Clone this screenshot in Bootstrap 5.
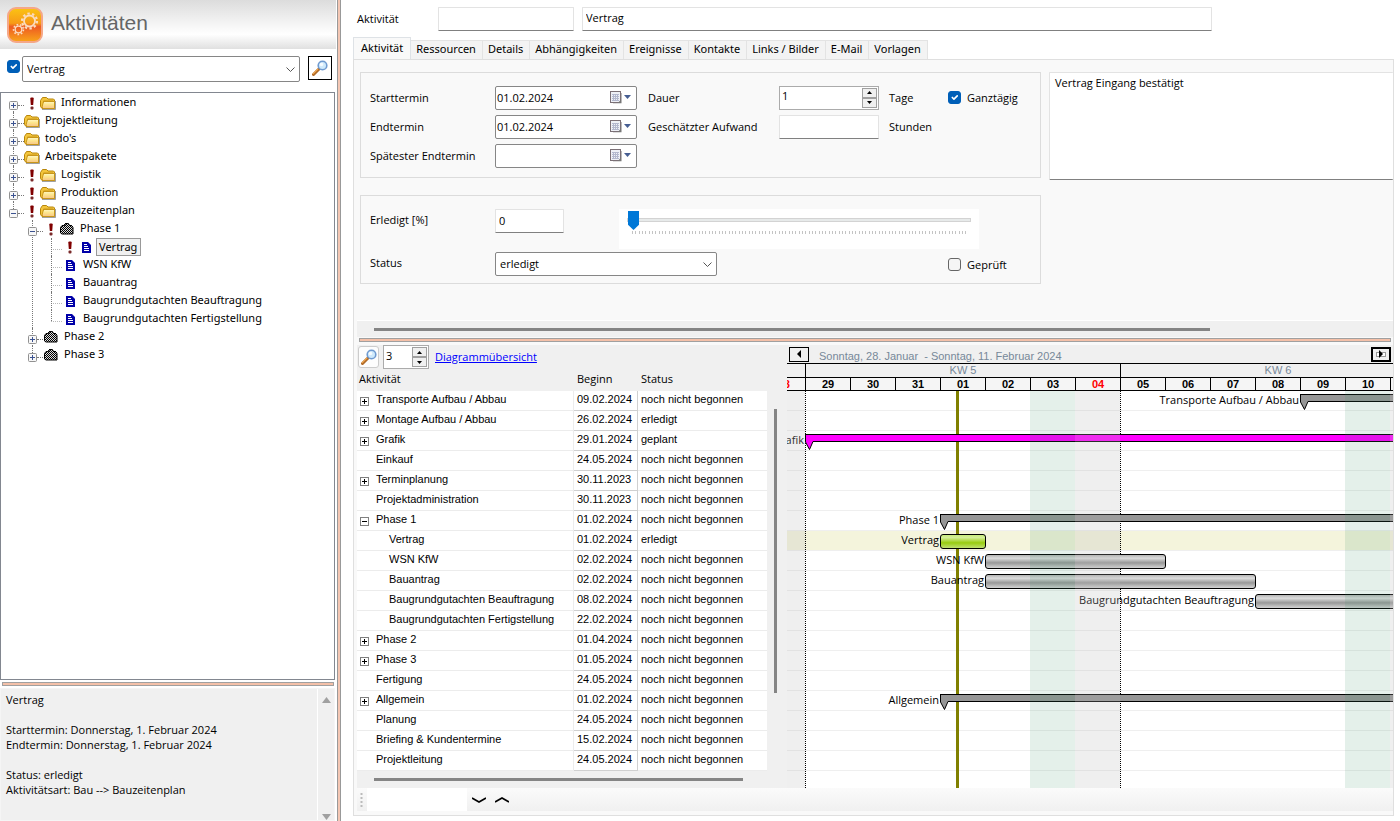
<!DOCTYPE html>
<html lang="de">
<head>
<meta charset="utf-8">
<meta name="viewport" content="width=device-width, initial-scale=1">
<title>Aktivitäten</title>
<link rel="stylesheet" href="https://cdn.jsdelivr.net/npm/bootstrap@5.3.0/dist/css/bootstrap.min.css">
<style>
body{font-family:"Open Sans","Noto Sans",sans-serif;font-size:11px;line-height:15px;color:#000;background:#fff}
svg{display:block;flex:none}
/* left pane */
.side{flex:0 0 24%;min-width:0}
.side-head{height:49px;background:linear-gradient(#dcdcdc,#fff 70%,#e0e0e0);gap:8px;padding-left:7px}
.side-head h1{font:21px/28px "Liberation Sans",sans-serif;color:#666;margin:0 0 4px}
.search-row{padding:7px 4px 0 7px;height:43px;gap:2px}
.search-row .form-check-input{margin-top:4px}
.form-check-input{width:13px;height:13px;margin:0;flex:none;border:1px solid #666;border-radius:3px!important;background-color:#f5f5f5}
.form-check-input:checked{background-color:#005fb8;border-color:#005fb8;background-size:11px}
.form-check-input+label{padding-left:6px}
.combo{font-size:11px;line-height:15px;padding:0 20px 2px 4px;border:1px solid #868686;border-radius:2px;height:26px;background-color:#fff;background-position:right 3px center;background-size:11px;color:#000;
 background-image:url("data:image/svg+xml,%3Csvg xmlns='http://www.w3.org/2000/svg' viewBox='0 0 11 11'%3E%3Cpath d='M1.5 3.5l4 4 4-4' fill='none' stroke='%23555'/%3E%3C/svg%3E")}
.find{width:24px;height:24px;border:1px solid #000;background:#fff;padding:0;margin:0 0 0 6px}
.tree-box{border:1px solid #828790;margin-right:1px;padding:1px 0 0 8px;background:#fff;font-family:"Noto Sans","Open Sans",sans-serif}
.tree,.tree ul{list-style:none;margin:0;padding:0}
.tree ul{margin-left:19px}
.tree li{position:relative}
.tree li::before{content:"";position:absolute;left:4px;top:0;bottom:0;border-left:1px dotted #777}
.tree>li:first-child::before{top:11px}
.tree li:last-child::before{bottom:auto;height:11px}
.node{height:18px;display:flex;align-items:center}
.pm{width:9px;height:9px;flex:none;margin-top:4px;position:relative;z-index:1}
.dots{width:6px;flex:none;border-top:1px dotted #777;margin-top:4px}
.leaf{width:15px;flex:none;border-top:1px dotted #777;margin-top:4px;clip-path:inset(0 0 0 4px)}
.slot{width:16px;height:16px;flex:none;display:flex;align-items:center;justify-content:center}
.cap{padding:0 0 2px 5px;line-height:16px;white-space:nowrap}
.cap.sel{margin-left:2px;padding:0 3px 0 2px;border:1px solid #999;background:#f0f0f0}
.splitter{height:4px;border:1px solid #a0a0a0;background:#f4c0a8}
.side .splitter{margin:2px 2px 2px}
.vsplit{width:4px;flex:none;border:1px solid #999;border-width:0 1px;background:#f4c7b4;margin-left:1px}
.memo{background:#f0f0f0;border:1px solid #f5f5f5;padding:3px 0 0 5px;margin-right:1px}
.memo p{margin:0}
.memo-text{padding-bottom:8px}
.memo-bar{width:17px;border-left:1px solid #fff;flex:none;margin-top:-3px}
/* text fields */
.tb{font-size:11px;line-height:15px;height:24px;padding:0 3px 2px;border:1px solid #e3e3e3;border-bottom-color:#808080;border-radius:1px;background:#fff;color:#000;min-width:0}
.tb:focus{box-shadow:none}
.top-row{height:37px;padding-left:16px}
.top-row label{width:81px}
.f-nr{flex:128 1 0}.f-name{flex:622 1 0}.f-rest{flex:188 1 0}
.nav-tabs{border:0;padding-left:12px;font-family:"Noto Sans","Open Sans",sans-serif}
.nav-tabs .nav-link{font-size:11px;line-height:14px;color:#000;background:#f3f3f3;border:1px solid #e3e3e3;border-left-width:0;border-bottom:0;border-radius:0;padding:1px 6px 3px 5px;height:19px;margin:0}
.nav-tabs .nav-link.active{background:#f9f9f9;border-left-width:1px;height:23px;padding:2px 7px 5px;margin-bottom:-1px;color:#000}
.pane{background:#f9f9f9;border:1px solid #dfdfdf;margin:0 6px 5px 12px;min-width:0}
.pane-form{padding:12px 0 0 6px;gap:8px}
.groups{flex:681 1 0;min-width:0;gap:17px}
.grp{border:1px solid #dcdcdc}
.grid-a{display:grid;grid-template-columns:125px 142px 11px 131px 100px 10px 59px 1fr;grid-auto-rows:29px;align-items:center;padding:10px 0 7px 9px}
.grid-b{display:grid;grid-template-columns:125px 222px 231px 1fr;row-gap:3px;padding:13px 0 7px 9px}
.grid-b>label{padding-top:3px}
.grid-b .combo{height:24px}
.w-pc{width:69px}
.date{position:relative}
.date .tb{width:100%;border-color:#868686;border-radius:2px;padding:0 1px 1px}
.date button{position:absolute;right:5px;top:3px;border:0;background:none;padding:0}
.spin{border:1px solid #ababab;background:#fff;height:24px;padding:1px}
.spin input{border:0;padding:0 1px;font-size:11px;line-height:15px;min-width:0;width:100%;height:16px;background:#fff;color:#000}
.spin div button{display:flex;align-items:center;justify-content:center;width:15px;height:10px;border:1px solid #a0a0a0;background:#f0f0f0;padding:0}
.notes{flex:333 1 0;height:108px;resize:none;padding:2px 5px;border-right:0}
/* slider */
.track-box{background:#fff;height:40px;padding:1px 8px 0;position:relative;width:360px;margin-left:-98px;justify-self:start;grid-column:3/5}
.track-box::after{content:"";position:absolute;left:13px;right:12px;top:22px;height:3px;background:repeating-linear-gradient(90deg,#c4c4c4 0 1px,transparent 1px 3px,#c4c4c4 3px 4px,transparent 4px 7px,#c4c4c4 7px 8px,transparent 8px 10px)}
.track-box input{display:block;appearance:none;-webkit-appearance:none;width:100%;height:20px;margin:0;background:none}
.track-box input::-webkit-slider-runnable-track{height:4px;background:#e7eaea;border:1px solid #d3d3d3}
.track-box input::-webkit-slider-thumb{-webkit-appearance:none;width:11px;height:19px;margin-top:-8px;background:#0078d7;border:0;border-radius:0;clip-path:polygon(0 0,100% 0,100% 72%,50% 100%,0 72%)}
.sb-h{background:#f0f0f0;border-top:1px solid #fff;padding:7px 0 0 17px;height:17px}
.sb-h div{height:3px;background:#858585}
.pane>.sb-h{margin-left:3px}
.pane>.splitter{margin:1px 2px 3px 5px}
/* lower panel */
.lower{background:#f0f0f0;margin-left:3px}
.plan{flex:430 1 0;min-width:0}
.plan-bar{height:24px;gap:4px;padding-left:1px}
.plan-bar .spin{width:46px}
.plan-bar a{color:#00f;margin:0 0 2px 2px}
.mag{width:21px;height:22px;border:1px solid #ccc;border-radius:3px;background:#fdfdfd;padding:0}
.ptab{font:11px/14px "Liberation Sans",sans-serif;width:100%;table-layout:fixed;border-collapse:separate;border-spacing:0}
.ptab th{font:11px/15px "Open Sans",sans-serif;height:22px;padding:2px 0 5px 2px}
.ptab td{background:#fff;height:20px;padding:0 0 3px 2px;border-bottom:1px solid #ececec;border-right:1px solid #ececec;white-space:nowrap;overflow:hidden}
.ptab th+th,.ptab td+td{padding-left:3px}
.ptab td:first-child{padding-left:19px;position:relative}
.ptab td.sub:first-child{padding-left:32px}
.ptab td:nth-child(2){border-color:#d0d0d0}
.ptab td:last-child{border-right:0}
.ptab svg{position:absolute;left:3px;top:6px}
.c-date{width:64px}.c-stat{width:129px}
.sb-v{width:20px;flex:none;padding:40px 10px 0 7px}
.sb-v div{width:3px;height:284px;background:#858585}
/* chart */
.chart{flex:606 1 0;min-width:0;overflow:hidden;--day:45px;--zero:18px}
.chart-bar{height:18px;font:11px/14px "Liberation Sans",sans-serif;color:#778899;padding:0 2px}
.chart-bar span{white-space:pre;padding:3px 0 0 10px}
.chart-bar button{width:20px;height:15px;border:1px solid #000;background:#f0f0f0;padding:0;display:flex;align-items:center;justify-content:center}
.chart-bar button.end{border-width:2px}
.weeks,.days{display:flex;border-top:1px solid #000;height:14px;font:11px/13px "Liberation Sans",sans-serif;color:#778899}
.weeks div{flex:none;width:calc(var(--day)*7);border-left:1px solid #000;text-align:center}
.weeks div:first-child{width:var(--zero);border:0}
.days{border-bottom:1px solid #000;color:#000;font-weight:bold;background:#f5f5f5}
.days div{flex:none;width:var(--day);border-left:1px solid #000;text-align:center;line-height:13px}
.days div:first-child{width:var(--zero);border:0;overflow:hidden;display:flex;justify-content:flex-end;padding-right:15px}
.days .sun{color:#f00}
.canvas{position:relative;background:#fff;height:397px}
.lane{height:20px;border-bottom:1px solid #efefef;position:relative}
.lane.cur{background:#f4f4dc}
.wk,.off,.now{position:absolute;top:0;bottom:0;left:calc(var(--zero) + var(--day)*var(--s))}
.wk{border-left:1px dotted #000}
.now{width:3px;background:#808000;margin-left:16px}
.off{width:var(--day);background:rgba(58,146,102,.137);z-index:3}
.off.su{background:rgba(187,187,187,.235)}
.item{position:absolute;top:3px;height:15px;left:calc(var(--zero) + var(--day)*var(--s));width:calc(var(--day)*var(--n) + 1px);z-index:1}
.item span{position:absolute;right:100%;top:-2px;white-space:nowrap;line-height:14px;padding-right:2px}
.task{border:1px solid #000;border-radius:3px;background:linear-gradient(#b4b4b4,#dcdcdc 25%,#989898 60%,#d4d4d4)}
.task.hot{background:linear-gradient(#c8ec7c,#d4ee98 20%,#98cc10 60%,#c0e070)}
.sum{height:8px;border:1px solid #000;background:#969696}
.sum.mg{background:#f0f}
.sum svg{position:absolute;left:-1px;top:5px}
.foot{margin-left:3px;height:23px;background:linear-gradient(#fbfbfb,#f0f0f0);padding-left:3px}
.foot input{width:100px;height:23px;border:0;margin:0 5px 0 4px}
.foot button{border:0;background:none;padding:0;margin-right:9px}
</style>
</head>
<body>
<svg width="0" height="0" class="position-absolute" aria-hidden="true">
 <defs>
  <linearGradient id="gFold" x1="0" y1="0" x2="0" y2="1"><stop offset="0" stop-color="#fffbd0"/><stop offset=".5" stop-color="#fde58a"/><stop offset="1" stop-color="#f8c48a"/></linearGradient>
  <linearGradient id="gLogo" x1="0" y1="0" x2="0" y2="1"><stop offset="0" stop-color="#fbc413"/><stop offset=".45" stop-color="#f79a18"/><stop offset=".55" stop-color="#ee5a22"/><stop offset="1" stop-color="#f9a61a"/></linearGradient>
  <pattern id="chk" width="2" height="2" patternUnits="userSpaceOnUse"><rect width="2" height="2" fill="#000"/><rect width="1" height="1" fill="#ddd"/><rect x="1" y="1" width="1" height="1" fill="#ddd"/></pattern>
 </defs>
 <symbol id="plus" viewBox="0 0 9 9"><rect x=".5" y=".5" width="8" height="8" rx="1" fill="#f7f7f7" stroke="#919191"/><path d="M2 4.500h5M4.500 2v5" stroke="#3b5290"/></symbol>
 <symbol id="minus" viewBox="0 0 9 9"><rect x=".5" y=".5" width="8" height="8" rx="1" fill="#f7f7f7" stroke="#919191"/><path d="M2 4.500h5" stroke="#3b5290"/></symbol>
 <symbol id="gplus" viewBox="0 0 9 9"><rect x=".5" y=".5" width="8" height="8" fill="#fff" stroke="#808080"/><path d="M2 4.500h5M4.500 2v5" stroke="#000"/></symbol>
 <symbol id="gminus" viewBox="0 0 9 9"><rect x=".5" y=".5" width="8" height="8" fill="#fff" stroke="#808080"/><path d="M2 4.500h5" stroke="#000"/></symbol>
 <symbol id="bang" viewBox="0 0 4 13"><path d="M.3 1.500Q.3.500 1.300.500h1.400q1 0 1 1L3.200 8H.8z" fill="#800000"/><rect x=".5" y="9.500" width="3" height="3" rx="1" fill="#7a2a2a"/></symbol>
 <symbol id="folder" viewBox="0 0 16 14"><path d="M2 13.500h13.500V5" fill="none" stroke="#777" opacity=".7"/><path d="M.5 4.500L2.500 1.500h4l1.500 1.500h5.500l1 1v8.500H2l-1.500-2z" fill="#f3c53c" stroke="#b8860b"/><path d="M3.500 6.500V5h9.500M3.500 5.500h11v7H3l-1-1.500z" fill="url(#gFold)" stroke="#c8961a"/></symbol>
 <symbol id="bin" viewBox="0 0 14 12"><path d="M1 3l1-1h2l1-2h3l1 2h2l2 2v7H1L0 9V4z" fill="url(#chk)" shape-rendering="crispEdges"/><path d="M.5 10V4.500L2 2.500h2.500L5.500.5h3l1 2h2l1.500 2v6.500h-11z" fill="none" stroke="#000"/></symbol>
 <symbol id="doc" viewBox="0 0 9 11"><path d="M0 0h6l3 3v8H0z" fill="#0000a8"/><path d="M2 2.500h3M2 4.500h4M2 6.500h5M2 8.500h5" stroke="#fff"/></symbol>
 <symbol id="glass" viewBox="0 0 16 16"><path d="M1.500 14.500L7 9" stroke="#b06a28" stroke-width="3" stroke-linecap="round"/><path d="M1.300 13.700L5.800 9.200" stroke="#f0a850" stroke-width="1.200" stroke-linecap="round"/><circle cx="10.500" cy="5.500" r="4.300" fill="#cfeafc" stroke="#6f9ad0" stroke-width="1.600"/><circle cx="9.500" cy="4.500" r="1.800" fill="#fff" opacity=".8"/></symbol>
 <symbol id="cal" viewBox="0 0 22 16"><path d="M11.500 4v10H3" stroke="#bbb" fill="none"/><rect x=".5" y="2.500" width="10" height="11" fill="#eef0f6" stroke="#7b7076"/><path d="M3.500 5v7M5.500 5v7M7.500 5v7M2 5.500h7M2 7.500h7M2 9.500h7M2 11.500h7" stroke="#b3b8ce"/><path d="M11 10.500L8 14h3z" fill="#777"/><path d="M14 6h7l-3.500 4z" fill="#465e92"/></symbol>
 <symbol id="up" viewBox="0 0 5 3"><path d="M0 3h5L2.500 0z" fill="#000"/></symbol>
 <symbol id="down" viewBox="0 0 5 3"><path d="M0 0h5L2.500 3z" fill="#000"/></symbol>
</svg>

<div class="d-flex min-vh-100">
 <aside class="side d-flex flex-column">
  <header class="side-head d-flex align-items-center">
   <svg width="36" height="36" viewBox="0 0 36 36"><rect x="1" y="1" width="34" height="34" rx="8" fill="url(#gLogo)" stroke="#f5a788" stroke-width="2"/><g fill="none" stroke="#fbdcc0"><circle cx="22.500" cy="14" r="5.500" stroke-width="1.800"/><circle cx="22.500" cy="14" r="7.500" stroke-width="2.200" stroke-dasharray="2.400 2.310"/><circle cx="11.500" cy="22.500" r="3.300" stroke-width="1.300"/><circle cx="11.500" cy="22.500" r="4.900" stroke-width="1.700" stroke-dasharray="1.700 1.720"/></g></svg>
   <h1>Aktivitäten</h1>
  </header>
  <div class="search-row d-flex align-items-start">
   <input class="form-check-input" type="checkbox" checked aria-label="Filter aktiv">
   <select class="form-select combo flex-grow-1 w-auto" aria-label="Suche"><option>Vertrag</option></select>
   <button class="find d-flex align-items-center justify-content-center" aria-label="Suchen"><svg width="16" height="16"><use href="#glass"/></svg></button>
  </div>
  <div class="tree-box flex-grow-1">
   <ul class="tree">
    <li><div class="node"><svg class="pm"><use href="#plus"/></svg><i class="dots"></i><span class="slot"><svg width="4" height="13"><use href="#bang"/></svg></span><svg width="16" height="14"><use href="#folder"/></svg><span class="cap">Informationen</span></div></li>
    <li><div class="node"><svg class="pm"><use href="#plus"/></svg><i class="dots"></i><svg width="16" height="14"><use href="#folder"/></svg><span class="cap">Projektleitung</span></div></li>
    <li><div class="node"><svg class="pm"><use href="#plus"/></svg><i class="dots"></i><svg width="16" height="14"><use href="#folder"/></svg><span class="cap">todo's</span></div></li>
    <li><div class="node"><svg class="pm"><use href="#plus"/></svg><i class="dots"></i><svg width="16" height="14"><use href="#folder"/></svg><span class="cap">Arbeitspakete</span></div></li>
    <li><div class="node"><svg class="pm"><use href="#plus"/></svg><i class="dots"></i><span class="slot"><svg width="4" height="13"><use href="#bang"/></svg></span><svg width="16" height="14"><use href="#folder"/></svg><span class="cap">Logistik</span></div></li>
    <li><div class="node"><svg class="pm"><use href="#plus"/></svg><i class="dots"></i><span class="slot"><svg width="4" height="13"><use href="#bang"/></svg></span><svg width="16" height="14"><use href="#folder"/></svg><span class="cap">Produktion</span></div></li>
    <li><div class="node"><svg class="pm"><use href="#minus"/></svg><i class="dots"></i><span class="slot"><svg width="4" height="13"><use href="#bang"/></svg></span><svg width="16" height="14"><use href="#folder"/></svg><span class="cap">Bauzeitenplan</span></div>
     <ul>
      <li><div class="node"><svg class="pm"><use href="#minus"/></svg><i class="dots"></i><span class="slot"><svg width="4" height="13"><use href="#bang"/></svg></span><span class="slot"><svg width="14" height="12"><use href="#bin"/></svg></span><span class="cap">Phase 1</span></div>
       <ul>
        <li><div class="node"><i class="leaf"></i><span class="slot"><svg width="4" height="13"><use href="#bang"/></svg></span><span class="slot"><svg width="9" height="11"><use href="#doc"/></svg></span><span class="cap sel">Vertrag</span></div></li>
        <li><div class="node"><i class="leaf"></i><span class="slot"><svg width="9" height="11"><use href="#doc"/></svg></span><span class="cap">WSN KfW</span></div></li>
        <li><div class="node"><i class="leaf"></i><span class="slot"><svg width="9" height="11"><use href="#doc"/></svg></span><span class="cap">Bauantrag</span></div></li>
        <li><div class="node"><i class="leaf"></i><span class="slot"><svg width="9" height="11"><use href="#doc"/></svg></span><span class="cap">Baugrundgutachten Beauftragung</span></div></li>
        <li><div class="node"><i class="leaf"></i><span class="slot"><svg width="9" height="11"><use href="#doc"/></svg></span><span class="cap">Baugrundgutachten Fertigstellung</span></div></li>
       </ul>
      </li>
      <li><div class="node"><svg class="pm"><use href="#plus"/></svg><i class="dots"></i><span class="slot"><svg width="14" height="12"><use href="#bin"/></svg></span><span class="cap">Phase 2</span></div></li>
      <li><div class="node"><svg class="pm"><use href="#plus"/></svg><i class="dots"></i><span class="slot"><svg width="14" height="12"><use href="#bin"/></svg></span><span class="cap">Phase 3</span></div></li>
     </ul>
    </li>
   </ul>
  </div>
  <div class="splitter"></div>
  <div class="memo d-flex">
   <div class="memo-text flex-grow-1">
    <p>Vertrag</p><p>&nbsp;</p>
    <p>Starttermin: Donnerstag, 1. Februar 2024</p>
    <p>Endtermin: Donnerstag, 1. Februar 2024</p><p>&nbsp;</p>
    <p>Status: erledigt</p>
    <p>Aktivitätsart: Bau --&gt; Bauzeitenplan</p><p>&nbsp;</p>
   </div>
   <div class="memo-bar d-flex flex-column justify-content-between align-items-center pt-2">
    <svg width="9" height="6"><path d="M0 6L4.500 0 9 6z" fill="#a0a0a0"/></svg>
    <svg width="9" height="6"><path d="M0 0L4.500 6 9 0z" fill="#a0a0a0"/></svg>
   </div>
  </div>
 </aside>
 <div class="vsplit"></div>

 <main class="flex-grow-1 d-flex flex-column overflow-hidden">
  <div class="top-row d-flex align-items-center">
   <label for="nr">Aktivität</label>
   <input id="nr" class="form-control tb f-nr">
   <input class="form-control tb f-name ms-2" aria-label="Bezeichnung" value="Vertrag">
   <div class="f-rest"></div>
  </div>
  <ul class="nav nav-tabs align-items-end" role="tablist">
   <li class="nav-item"><button class="nav-link active">Aktivität</button></li>
   <li class="nav-item"><button class="nav-link">Ressourcen</button></li>
   <li class="nav-item"><button class="nav-link">Details</button></li>
   <li class="nav-item"><button class="nav-link">Abhängigkeiten</button></li>
   <li class="nav-item"><button class="nav-link">Ereignisse</button></li>
   <li class="nav-item"><button class="nav-link">Kontakte</button></li>
   <li class="nav-item"><button class="nav-link">Links / Bilder</button></li>
   <li class="nav-item"><button class="nav-link">E-Mail</button></li>
   <li class="nav-item"><button class="nav-link">Vorlagen</button></li>
  </ul>
  <section class="pane flex-grow-1 d-flex flex-column pb-1">
   <div class="pane-form d-flex align-items-start flex-grow-1">
    <div class="groups d-flex flex-column">
     <div class="grp grid-a">
      <label for="d1">Starttermin</label>
      <div class="date"><input id="d1" class="form-control tb" value="01.02.2024"><button aria-label="Kalender"><svg width="22" height="16"><use href="#cal"/></svg></button></div><i></i>
      <label for="dau">Dauer</label>
      <div class="spin d-flex"><input id="dau" value="1"><div><button aria-label="mehr"><svg width="5" height="3"><use href="#up"/></svg></button><button aria-label="weniger"><svg width="5" height="3"><use href="#down"/></svg></button></div></div><i></i>
      <span>Tage</span>
      <div class="d-flex align-items-center"><input id="gt" class="form-check-input" type="checkbox" checked><label for="gt">Ganztägig</label></div>
      <label for="d2">Endtermin</label>
      <div class="date"><input id="d2" class="form-control tb" value="01.02.2024"><button aria-label="Kalender"><svg width="22" height="16"><use href="#cal"/></svg></button></div><i></i>
      <label for="auf">Geschätzter Aufwand</label>
      <input id="auf" class="form-control tb"><i></i>
      <span>Stunden</span><i></i>
      <label for="d3">Spätester Endtermin</label>
      <div class="date"><input id="d3" class="form-control tb"><button aria-label="Kalender"><svg width="22" height="16"><use href="#cal"/></svg></button></div>
     </div>
     <div class="grp grid-b">
      <label for="pc">Erledigt [%]</label>
      <input id="pc" class="form-control tb w-pc" value="0">
      <div class="track-box"><input type="range" min="0" max="100" value="0" aria-label="Erledigt"></div>
      <label for="st">Status</label>
      <select id="st" class="form-select combo"><option>erledigt</option></select><i></i>
      <div class="d-flex align-items-center"><input id="gp" class="form-check-input" type="checkbox"><label for="gp">Geprüft</label></div>
     </div>
    </div>
    <textarea class="form-control tb notes" aria-label="Notiz">Vertrag Eingang bestätigt</textarea>
   </div>
   <div class="sb-h"><div style="width:82%"></div></div>
   <div class="splitter"></div>
   <div class="lower d-flex">
    <div class="plan">
     <div class="plan-bar d-flex align-items-center">
      <button class="mag d-flex align-items-center justify-content-center" aria-label="Suchen"><svg width="16" height="16"><use href="#glass"/></svg></button>
      <div class="spin d-flex"><input value="3" aria-label="Ebene"><div><button aria-label="mehr"><svg width="5" height="3"><use href="#up"/></svg></button><button aria-label="weniger"><svg width="5" height="3"><use href="#down"/></svg></button></div></div>
      <a href="#">Diagrammübersicht</a>
     </div>
     <div class="d-flex">
     <div class="flex-grow-1">
     <table class="ptab">
      <colgroup><col><col class="c-date"><col class="c-stat"></colgroup>
      <thead><tr><th>Aktivität</th><th>Beginn</th><th>Status</th></tr></thead>
      <tbody>
       <tr><td><svg width="9" height="9"><use href="#gplus"/></svg>Transporte Aufbau / Abbau</td><td>09.02.2024</td><td>noch nicht begonnen</td></tr>
       <tr><td><svg width="9" height="9"><use href="#gplus"/></svg>Montage Aufbau / Abbau</td><td>26.02.2024</td><td>erledigt</td></tr>
       <tr><td><svg width="9" height="9"><use href="#gplus"/></svg>Grafik</td><td>29.01.2024</td><td>geplant</td></tr>
       <tr><td>Einkauf</td><td>24.05.2024</td><td>noch nicht begonnen</td></tr>
       <tr><td><svg width="9" height="9"><use href="#gplus"/></svg>Terminplanung</td><td>30.11.2023</td><td>noch nicht begonnen</td></tr>
       <tr><td>Projektadministration</td><td>30.11.2023</td><td>noch nicht begonnen</td></tr>
       <tr><td><svg width="9" height="9"><use href="#gminus"/></svg>Phase 1</td><td>01.02.2024</td><td>noch nicht begonnen</td></tr>
       <tr><td class="sub">Vertrag</td><td>01.02.2024</td><td>erledigt</td></tr>
       <tr><td class="sub">WSN KfW</td><td>02.02.2024</td><td>noch nicht begonnen</td></tr>
       <tr><td class="sub">Bauantrag</td><td>02.02.2024</td><td>noch nicht begonnen</td></tr>
       <tr><td class="sub">Baugrundgutachten Beauftragung</td><td>08.02.2024</td><td>noch nicht begonnen</td></tr>
       <tr><td class="sub">Baugrundgutachten Fertigstellung</td><td>22.02.2024</td><td>noch nicht begonnen</td></tr>
       <tr><td><svg width="9" height="9"><use href="#gplus"/></svg>Phase 2</td><td>01.04.2024</td><td>noch nicht begonnen</td></tr>
       <tr><td><svg width="9" height="9"><use href="#gplus"/></svg>Phase 3</td><td>01.05.2024</td><td>noch nicht begonnen</td></tr>
       <tr><td>Fertigung</td><td>24.05.2024</td><td>noch nicht begonnen</td></tr>
       <tr><td><svg width="9" height="9"><use href="#gplus"/></svg>Allgemein</td><td>01.02.2024</td><td>noch nicht begonnen</td></tr>
       <tr><td>Planung</td><td>24.05.2024</td><td>noch nicht begonnen</td></tr>
       <tr><td>Briefing &amp; Kundentermine</td><td>15.02.2024</td><td>noch nicht begonnen</td></tr>
       <tr><td>Projektleitung</td><td>24.05.2024</td><td>noch nicht begonnen</td></tr>
      </tbody>
     </table>
     <div class="sb-h border-0"><div style="width:94%"></div></div>
     </div>
     <div class="sb-v"><div></div></div>
     </div>
    </div>
    <div class="chart">
     <div class="chart-bar d-flex align-items-center">
      <button aria-label="zurück"><svg width="4" height="8"><path d="M4 0v8L0 4z"/></svg></button>
      <span class="flex-grow-1">Sonntag, 28. Januar  - Sonntag, 11. Februar 2024</span>
      <button class="end" aria-label="vor"><svg width="10" height="8"><rect x=".5" y="2.500" width="9" height="4" fill="#fff" stroke="#999"/><path d="M3 0v8l4-4z"/></svg></button>
     </div>
     <div class="weeks"><div></div><div>KW 5</div><div>KW 6</div></div>
     <div class="days"><div class="sun">28</div><div>29</div><div>30</div><div>31</div><div>01</div><div>02</div><div>03</div><div class="sun">04</div><div>05</div><div>06</div><div>07</div><div>08</div><div>09</div><div>10</div><div></div></div>
     <div class="canvas overflow-hidden">
      <div class="lane"><div class="item sum" style="--s:11;--n:9"><span>Transporte Aufbau / Abbau</span><svg width="9" height="10"><path d="M.5 0v2L4.500 9.500 8 1.500V0z" fill="#969696"/><path d="M.5 0v2l4 7.500L8 1.500" fill="none" stroke="#000"/></svg></div></div>
      <div class="lane"></div>
      <div class="lane"><div class="item sum mg" style="--s:0;--n:20"><span>Grafik</span><svg width="9" height="10"><path d="M.5 0v2L4.500 9.500 8 1.500V0z" fill="#f0f"/><path d="M.5 0v2l4 7.500L8 1.500" fill="none" stroke="#000"/></svg></div></div>
      <div class="lane"></div><div class="lane"></div><div class="lane"></div>
      <div class="lane"><div class="item sum" style="--s:3;--n:17"><span>Phase 1</span><svg width="9" height="10"><path d="M.5 0v2L4.500 9.500 8 1.500V0z" fill="#969696"/><path d="M.5 0v2l4 7.500L8 1.500" fill="none" stroke="#000"/></svg></div></div>
      <div class="lane cur"><div class="item task hot" style="--s:3;--n:1"><span>Vertrag</span></div></div>
      <div class="lane"><div class="item task" style="--s:4;--n:4"><span>WSN KfW</span></div></div>
      <div class="lane"><div class="item task" style="--s:4;--n:6"><span>Bauantrag</span></div></div>
      <div class="lane"><div class="item task" style="--s:10;--n:10"><span>Baugrundgutachten Beauftragung</span></div></div>
      <div class="lane"></div><div class="lane"></div><div class="lane"></div><div class="lane"></div>
      <div class="lane"><div class="item sum" style="--s:3;--n:17"><span>Allgemein</span><svg width="9" height="10"><path d="M.5 0v2L4.500 9.500 8 1.500V0z" fill="#969696"/><path d="M.5 0v2l4 7.500L8 1.500" fill="none" stroke="#000"/></svg></div></div>
      <div class="lane"></div><div class="lane"></div><div class="lane"></div>
      <div class="wk" style="--s:0"></div><div class="wk" style="--s:7"></div>
      <div class="now" style="--s:3"></div>
      <div class="off su" style="--s:-1"></div><div class="off" style="--s:5"></div><div class="off su" style="--s:6"></div><div class="off" style="--s:12"></div><div class="off su" style="--s:13"></div>
     </div>
    </div>
   </div>
   <div class="foot d-flex align-items-center">
    <svg width="3" height="15"><path d="M1.500 1v14" stroke="#bbb" stroke-width="2" stroke-dasharray="2 2"/></svg>
    <input aria-label="Suchtext">
    <button aria-label="weiter"><svg width="14" height="8"><path d="M0 2l7 4 7-4" fill="none" stroke="#000" stroke-width="1.600"/></svg></button>
    <button aria-label="zurück"><svg width="14" height="8"><path d="M0 6l7-4 7 4" fill="none" stroke="#000" stroke-width="1.600"/></svg></button>
   </div>
  </section>
 </main>
</div>
<script src="https://cdn.jsdelivr.net/npm/bootstrap@5.3.0/dist/js/bootstrap.bundle.min.js"></script>
</body>
</html>
